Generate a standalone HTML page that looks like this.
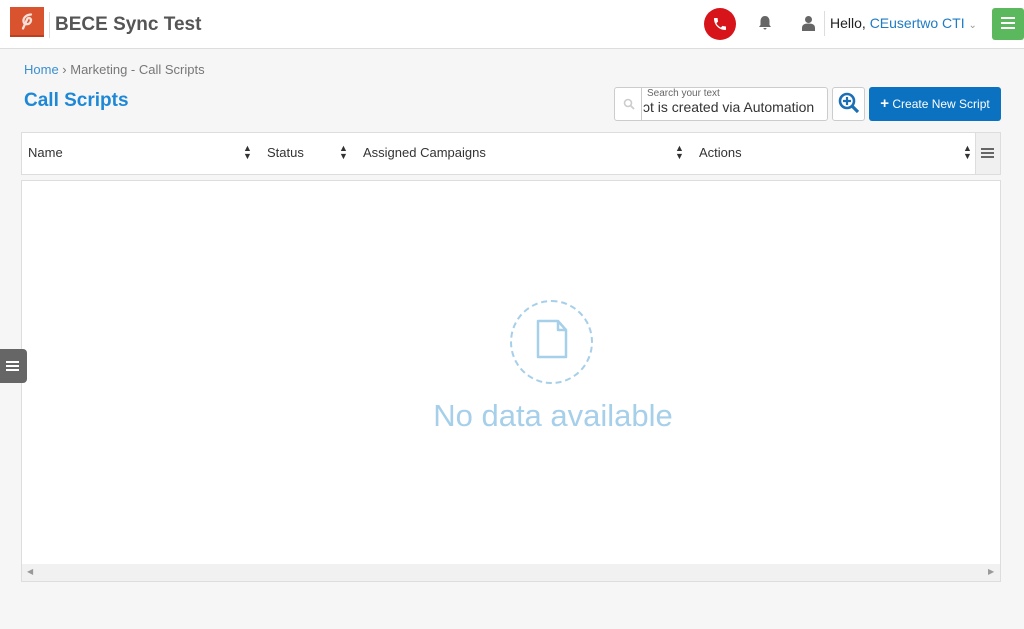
<!DOCTYPE html>
<html><head><meta charset="utf-8"><style>
*{box-sizing:border-box;margin:0;padding:0}
body{width:1024px;height:629px;background:#f6f6f6;font-family:"Liberation Sans",sans-serif;position:relative;overflow:hidden}
.a{position:absolute}
</style></head><body>
<div class="a" style="left:0;top:0;width:1024px;height:49px;background:#fff;border-bottom:1px solid #ddd"></div>
<div class="a" style="left:10px;top:7px;width:34px;height:30px;background:#d9532f;border-bottom:2px solid #b94020"></div>
<svg class="a" style="left:10px;top:7px" width="34" height="30" viewBox="0 0 34 30"><path d="M21 7.5C18 7.5 13 9.5 13.5 14.5C14 18 19 18 20.5 15C22 12 19.5 10 17.5 11.5L13 21.5" fill="none" stroke="#f7e0d8" stroke-width="2.3" stroke-linecap="round"/></svg>
<div class="a" style="left:49px;top:12px;width:1px;height:26px;background:#ddd"></div>
<div class="a" style="left:55px;top:14px;font-size:19px;font-weight:bold;color:#555">BECE Sync Test</div>
<div class="a" style="left:704px;top:8px;width:32px;height:32px;border-radius:50%;background:#d7141a"></div>
<svg class="a" style="left:712px;top:16px" width="16" height="16" viewBox="0 0 24 24"><path d="M6.6 10.8c1.4 2.8 3.8 5.1 6.6 6.6l2.2-2.2c.3-.3.7-.4 1-.2 1.1.4 2.3.6 3.6.6.6 0 1 .4 1 1V20c0 .6-.4 1-1 1C10.6 21 3 13.4 3 4c0-.6.4-1 1-1h3.5c.6 0 1 .4 1 1 0 1.3.2 2.5.6 3.6.1.3 0 .7-.2 1z" fill="#fff"/></svg>
<svg class="a" style="left:757px;top:15px" width="16" height="16" viewBox="0 0 16 16"><path d="M8 1c-3 0-4.5 2.5-4.5 5v4L2 12h12l-1.5-2V6C12.5 3.5 11 1 8 1z M6.5 13a1.5 1.5 0 003 0z" fill="#666"/></svg>
<svg class="a" style="left:802px;top:15px" width="13" height="16" viewBox="0 0 13 16"><circle cx="6.5" cy="4.5" r="3.5" fill="#666"/><path d="M0 16v-3c0-3 2-4.5 6.5-4.5S13 10 13 13v3z" fill="#666"/></svg>
<div class="a" style="left:824px;top:11px;width:1px;height:25px;background:#ddd"></div>
<div class="a" style="left:830px;top:15px;font-size:14px;color:#222">Hello, <span style="color:#1e7bc4">CEusertwo CTI</span> <span style="color:#999;font-size:10px">&#8964;</span></div>
<div class="a" style="left:992px;top:8px;width:32px;height:32px;background:#5cb85c;border-radius:3px"></div>
<div class="a" style="left:1001px;top:17px;width:14px;height:2px;background:#fff;box-shadow:0 5px 0 #fff,0 10px 0 #fff"></div>
<div class="a" style="left:24px;top:62px;font-size:13px;color:#777"><span style="color:#3a8fd0">Home</span> › Marketing - Call Scripts</div>
<div class="a" style="left:24px;top:90px;font-size:19px;font-weight:bold;color:#1e88d6">Call Scripts</div>
<div class="a" style="left:614px;top:87px;width:214px;height:34px;background:#fff;border:1px solid #ccc;border-radius:3px;overflow:hidden">
<div class="a" style="left:26px;top:0;width:1px;height:34px;background:#ccc"></div>
<svg class="a" style="left:8px;top:10px" width="12" height="12" viewBox="0 0 12 12"><circle cx="5" cy="5" r="3.5" stroke="#ccc" stroke-width="1.6" fill="none"/><line x1="7.5" y1="7.5" x2="11" y2="11" stroke="#ccc" stroke-width="1.8"/></svg>
<div class="a" style="left:32px;top:0px;font-size:10px;color:#666">Search your text</div>
<div class="a" style="left:28px;top:11px;font-size:14px;color:#333;white-space:nowrap">ɔt is created via Automation</div>
</div>
<div class="a" style="left:832px;top:87px;width:33px;height:34px;background:#fff;border:1px solid #ccc;border-radius:3px"></div>
<svg class="a" style="left:838px;top:92px" width="22" height="22" viewBox="0 0 22 22"><circle cx="9" cy="9" r="7" stroke="#1a6fb5" stroke-width="2.6" fill="none"/><path d="M9 5v8M5 9h8" stroke="#1a6fb5" stroke-width="2.2"/><line x1="14" y1="14" x2="20" y2="20" stroke="#1a6fb5" stroke-width="3.2"/></svg>
<div class="a" style="left:869px;top:87px;width:132px;height:34px;background:#0a72c0;border-radius:3px;color:#fff;font-size:12px;line-height:34px;text-align:center"><b style="font-size:15px">+</b> Create New Script</div>
<div class="a" style="left:21px;top:132px;width:980px;height:43px;background:#fff;border:1px solid #ddd"></div>
<div class="a" style="left:975px;top:132px;width:26px;height:43px;background:#f0f0f0;border:1px solid #ddd"></div>
<div class="a" style="left:981px;top:148px;width:13px;height:2px;background:#666;box-shadow:0 4px 0 #666,0 8px 0 #666"></div>
<div class="a" style="left:28px;top:145px;font-size:13px;color:#333">Name</div>
<div class="a" style="left:267px;top:145px;font-size:13px;color:#333">Status</div>
<div class="a" style="left:363px;top:145px;font-size:13px;color:#333">Assigned Campaigns</div>
<div class="a" style="left:699px;top:145px;font-size:13px;color:#333">Actions</div>
<div class="a" style="left:243px;top:144px;font-size:9px;line-height:8px;color:#333">▲<br>▼</div>
<div class="a" style="left:339px;top:144px;font-size:9px;line-height:8px;color:#333">▲<br>▼</div>
<div class="a" style="left:675px;top:144px;font-size:9px;line-height:8px;color:#333">▲<br>▼</div>
<div class="a" style="left:963px;top:144px;font-size:9px;line-height:8px;color:#333">▲<br>▼</div>
<div class="a" style="left:21px;top:180px;width:980px;height:402px;background:#fff;border:1px solid #ddd"></div>
<div class="a" style="left:22px;top:564px;width:978px;height:17px;background:#f1f1f1"></div>
<div class="a" style="left:27px;top:567px;font-size:8px;color:#999">◀</div>
<div class="a" style="left:988px;top:567px;font-size:8px;color:#999">▶</div>
<div class="a" style="left:510px;top:300px;width:83px;height:84px;border:2px dashed #a6cfea;border-radius:50%"></div>
<svg class="a" style="left:536px;top:319px" width="34" height="40" viewBox="0 0 34 40"><path d="M2 2h20l8 9v27H2z M22 2v9h8" fill="none" stroke="#a6cfea" stroke-width="2.5" stroke-linejoin="round"/></svg>
<div class="a" style="left:0;top:398px;width:1106px;text-align:center;font-size:31px;color:#a6cfea;font-weight:300">No data available</div>
<div class="a" style="left:0;top:349px;width:27px;height:34px;background:#666;border-radius:0 4px 4px 0"></div>
<div class="a" style="left:6px;top:361px;width:13px;height:2px;background:#fff;box-shadow:0 4px 0 #fff,0 8px 0 #fff"></div>
</body></html>
